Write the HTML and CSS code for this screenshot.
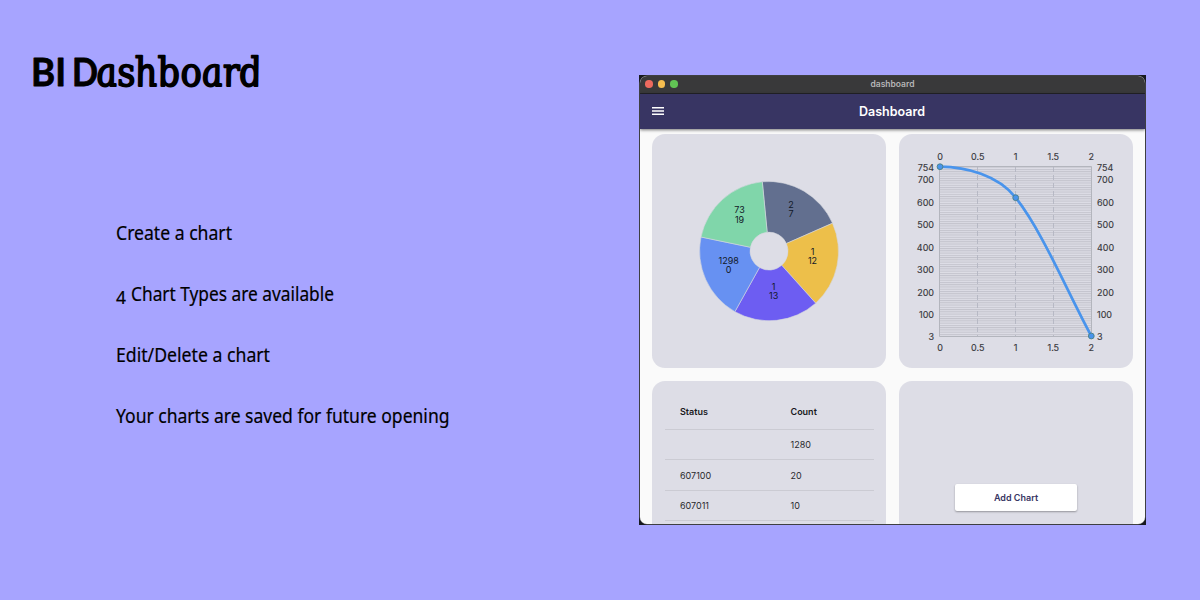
FILE: index.html
```html
<!DOCTYPE html>
<html lang="en">
<head>
<meta charset="utf-8">
<title>BI Dashboard</title>
<link rel="stylesheet" href="styles.css">
</head>
<body>
<main class="promo">
  <section class="intro">
    <h1><svg class="headline" width="260" height="60"><g class="caps"><text x="-1" y="45.500" textLength="35" lengthAdjust="spacingAndGlyphs">BI</text><text x="40" y="45.500" textLength="26" lengthAdjust="spacingAndGlyphs">D</text></g><text class="script" transform="translate(66 45.500) skewX(9)" textLength="166" lengthAdjust="spacingAndGlyphs">ashboard</text></svg></h1>
    <ul class="features">
      <li><svg width="360" height="40"><text x="0" y="27" textLength="116" lengthAdjust="spacingAndGlyphs">Create a chart</text></svg></li>
      <li><svg width="360" height="40"><text x="0" y="30" textLength="10" lengthAdjust="spacingAndGlyphs" class="digit">4</text><text x="15" y="27" textLength="203" lengthAdjust="spacingAndGlyphs">Chart Types are available</text></svg></li>
      <li><svg width="360" height="40"><text x="0" y="27" textLength="154" lengthAdjust="spacingAndGlyphs">Edit/Delete a chart</text></svg></li>
      <li><svg width="360" height="40"><text x="0" y="27" textLength="333.500" lengthAdjust="spacingAndGlyphs">Your charts are saved for future opening</text></svg></li>
    </ul>
  </section>
  <section class="desktop">
    <div class="window">
      <div class="titlebar"><div class="lights"><i class="red"></i><i class="yellow"></i><i class="green"></i></div><span>dashboard</span></div>
      <header class="appbar">
        <svg class="menu" width="12" height="8"><path d="M0 .7h12M0 4h12M0 7.300h12" stroke="#fff" stroke-width="1.400"/></svg>
        <span>Dashboard</span>
      </header>
      <div class="cards">
        <article class="card">
          <svg class="pie" width="234" height="234" viewBox="652 134 234 234">
            <g stroke="#d5d6df" stroke-width=".6">
              <path fill="#626f8f" d="M762.300 181.700A70 70 0 0 1 832.500 223.200L786.400 243.500A19 19 0 0 0 767.200 232.200Z"/>
              <path fill="#edbf4a" d="M832.500 223.200A70 70 0 0 1 815.700 303.200L781.700 265.300A19 19 0 0 0 786.400 243.500Z"/>
              <path fill="#6d5df2" d="M815.700 303.200A70 70 0 0 1 734.900 311.700L759.500 267.500A19 19 0 0 0 781.700 265.300Z"/>
              <path fill="#6791f2" d="M734.900 311.700A70 70 0 0 1 701 237L750.400 247.300A19 19 0 0 0 759.500 267.500Z"/>
              <path fill="#80d6aa" d="M701 237A70 70 0 0 1 762.300 181.700L767.200 232.200A19 19 0 0 0 750.400 247.300Z"/>
            </g>
            <g class="pie-text">
              <text x="791" y="207.500">2</text><text x="791" y="217">7</text>
              <text x="739.500" y="213">73</text><text x="739.500" y="222.500">19</text>
              <text x="812.500" y="255">1</text><text x="812.500" y="264.300">12</text>
              <text x="728.700" y="264">1298</text><text x="728.700" y="273.300">0</text>
              <text x="773.700" y="290">1</text><text x="773.700" y="299.300">13</text>
            </g>
          </svg>
        </article>
        <article class="card">
          <svg class="line" width="234" height="234" viewBox="899 134 234 234">
            <defs><pattern id="rules" x="939" y="166.700" width="152" height="2.260" patternUnits="userSpaceOnUse"><path d="M0 .5H152" stroke="#b9bac3" stroke-width=".8"/></pattern></defs>
            <path fill="url(#rules)" d="M939.500 166.500H1091.500V336.500H939.500Z"/>
            <path d="M977.500 167V336M1015.500 167V336M1053.500 167V336" stroke="#b3b5c2" stroke-width=".9" stroke-dasharray="5 3"/>
            <path d="M939.500 166.500H1091.500V336.500H939.500Z" fill="none" stroke="#b3b5bd"/>
            <path d="M940 166.700C966 167 998 175 1015.700 197.700C1042 231 1067 291 1091.300 336" fill="none" stroke="#4994ec" stroke-width="2.700"/>
            <g fill="#4994ec" stroke="#4b8084" stroke-width=".9"><circle cx="940" cy="166.700" r="2.900"/><circle cx="1015.700" cy="197.700" r="2.900"/><circle cx="1091.300" cy="336" r="2.900"/></g>
            <g class="ticks mid">
              <text x="940" y="159.700">0</text><text x="977.700" y="159.700">0.5</text><text x="1015.600" y="159.700">1</text><text x="1053.300" y="159.700">1.5</text><text x="1091.300" y="159.700">2</text>
              <text x="940" y="350.700">0</text><text x="977.700" y="350.700">0.5</text><text x="1015.600" y="350.700">1</text><text x="1053.300" y="350.700">1.5</text><text x="1091.300" y="350.700">2</text>
            </g>
            <g class="ticks end">
              <text x="934" y="170.500">754</text><text x="934" y="182.900">700</text><text x="934" y="205.500">600</text><text x="934" y="227.900">500</text><text x="934" y="250.500">400</text><text x="934" y="272.900">300</text><text x="934" y="295.500">200</text><text x="934" y="318.100">100</text><text x="934" y="339.900">3</text>
            </g>
            <g class="ticks">
              <text x="1097" y="170.500">754</text><text x="1097" y="182.900">700</text><text x="1097" y="205.500">600</text><text x="1097" y="227.900">500</text><text x="1097" y="250.500">400</text><text x="1097" y="272.900">300</text><text x="1097" y="295.500">200</text><text x="1097" y="318.100">100</text><text x="1097" y="339.900">3</text>
            </g>
          </svg>
        </article>
        <article class="card table-card">
          <div class="row head"><span>Status</span><span>Count</span></div>
          <div class="row"><span></span><span>1280</span></div>
          <div class="row"><span>607100</span><span>20</span></div>
          <div class="row"><span>607011</span><span>10</span></div>
        </article>
        <article class="card add-card"><button class="add">Add Chart</button></article>
      </div>
    </div>
  </section>
</main>
</body>
</html>
```
FILE: styles.css
```css
* { box-sizing: border-box; }
body { margin: 0; background: #a7a4ff; color: #000; font-family: Inter, sans-serif; }
.promo { display: flex; width: 1200px; height: 600px; overflow: hidden; }
.intro { width: 639px; padding: 40px 0 0 32px; }
h1 { margin: 0; height: 60px; }
.headline { display: block; overflow: visible; stroke-linejoin: round; }
.caps { font: 700 39px Lato, sans-serif; stroke: #000; stroke-width: .8px; }
.script { font: italic 40px "DejaVu Serif", serif; stroke: #000; stroke-width: 1.8px; }
.features { list-style: none; margin: 113px 0 0 84px; padding: 0; display: grid; gap: 21px; }
.features li { height: 40px; }
.features svg { display: block; font: 20.500px "Noto Sans", sans-serif; overflow: visible; stroke: #000; stroke-width: .2px; }
.features .digit { font-size: 18px; }
.desktop { width: 507px; height: 450px; margin-top: 75px; background: #17191f; padding: 1px; }
.window { height: 448px; background: #fafafa; border-radius: 7px; overflow: hidden; box-shadow: 0 0 0 .5px #666; }
.titlebar { height: 18px; padding-bottom: 1px; background: #39393a; border-bottom: 1px solid #232327; color: #b5b5b6; font-size: 8.500px; font-weight: 600; display: grid; grid-template-columns: 1fr auto 1fr; align-items: center; }
.lights { display: flex; gap: 5px; padding-left: 5px; }
.lights i { width: 7.500px; height: 7.500px; border-radius: 50%; }
.red { background: #ed6a5e; }
.yellow { background: #f5bd4f; }
.green { background: #61c454; }
.appbar { height: 35px; padding: 0 1px 1px 0; background: #383563; color: #fff; display: grid; grid-template-columns: 1fr auto 1fr; align-items: center; font-size: 12.500px; font-weight: 600; box-shadow: 0 1px 3px #0008; }
.menu { margin-left: 11.500px; }
.cards { display: grid; grid-template-columns: 234px 234px; grid-auto-rows: 234px; gap: 12.500px 13px; padding: 5px 0 0 12px; }
.card { background: #dddde6; border-radius: 13px; overflow: hidden; }
.card svg { display: block; }
.pie-text { font-size: 9px; text-anchor: middle; fill: #111827; }
.ticks { font-size: 9px; fill: #38383c; stroke: #38383c; stroke-width: .15px; }
.mid { text-anchor: middle; }
.end { text-anchor: end; }
.table-card { padding: 13.500px 12.500px 0; font-size: 9px; color: #29292d; }
.row { height: 30.400px; border-bottom: 1px solid #cbcbd3; display: grid; grid-template-columns: 110.500px 1fr; padding-left: 15.500px; align-items: center; }
.head { height: 36px; font-weight: 600; color: #19191c; }
.add-card { display: flex; justify-content: center; align-items: flex-start; padding-top: 103.500px; }
.add { width: 122px; height: 27px; border: 0; border-radius: 2px; background: #fff; box-shadow: 0 1px 2px #0005; color: #383563; font: 600 9px Inter, sans-serif; }
```
